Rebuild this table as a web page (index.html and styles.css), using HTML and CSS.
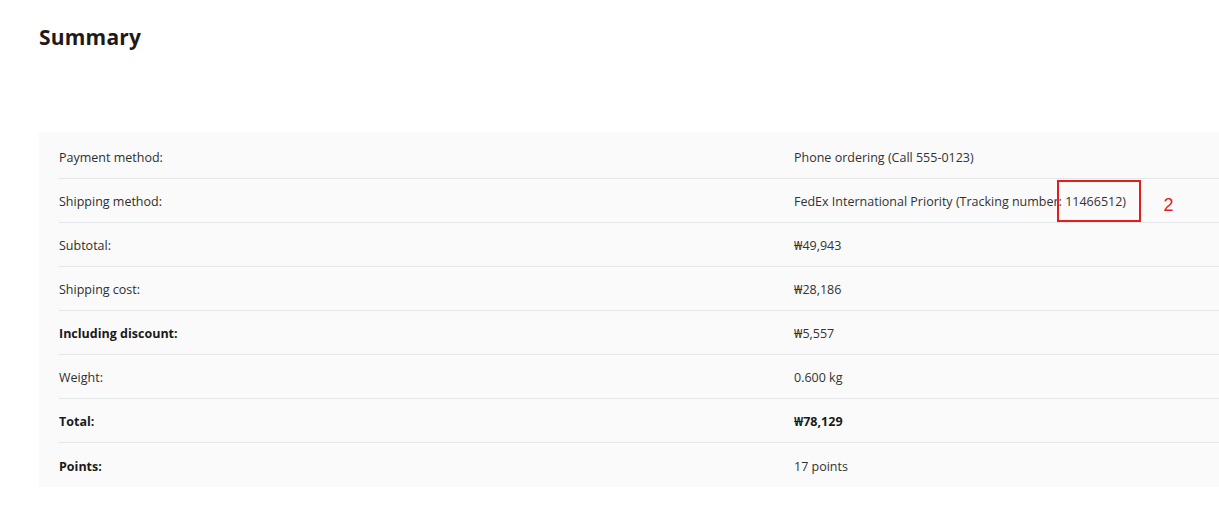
FILE: index.html
```html
<!DOCTYPE html>
<html lang="en">
<head>
<meta charset="utf-8">
<title>Summary</title>
<link rel="stylesheet" href="styles.css">
</head>
<body>
<main class="page">
  <h2 class="title">Summary</h2>
  <section class="summary">
    <div class="row">
      <div class="label">Payment method:</div>
      <div class="value">Phone ordering (Call 555-0123)</div>
    </div>
    <div class="row">
      <div class="label">Shipping method:</div>
      <div class="value">FedEx International Priority (Tracking number<span class="mark-wrap">: <span class="mark">11466512)</span><span class="mark-num">2</span></span></div>
    </div>
    <div class="row">
      <div class="label">Subtotal:</div>
      <div class="value">₩49,943</div>
    </div>
    <div class="row">
      <div class="label">Shipping cost:</div>
      <div class="value">₩28,186</div>
    </div>
    <div class="row">
      <div class="label strong">Including discount:</div>
      <div class="value">₩5,557</div>
    </div>
    <div class="row">
      <div class="label">Weight:</div>
      <div class="value">0.600 kg</div>
    </div>
    <div class="row">
      <div class="label strong">Total:</div>
      <div class="value strong">₩78,129</div>
    </div>
    <div class="row last">
      <div class="label strong">Points:</div>
      <div class="value">17 points</div>
    </div>
  </section>
</main>
</body>
</html>
```

FILE: styles.css
```css
html, body {
  margin: 0;
  padding: 0;
  background: #ffffff;
  overflow: hidden;
}

body {
  font-family: "Open Sans", "Noto Sans", "DejaVu Sans", sans-serif;
  color: #2b2b2b;
}

.page {
  padding: 22px 0 0 39px;
}

.title {
  margin: 0;
  font-family: "Open Sans", "Noto Sans", sans-serif;
  font-size: 21px;
  font-weight: 700;
  color: #1f1a1a;
  line-height: 30px;
  letter-spacing: 0.2px;
}

.summary {
  margin-top: 80px;
  width: 1250px;
  background: #fafafa;
  padding: 3px 0 0 20px;
}

.row {
  box-sizing: border-box;
  display: flex;
  align-items: center;
  height: 44px;
  padding-top: 2px;
  border-bottom: 1px solid #e3e6ea;
  font-size: 12.5px;
}

.row.last {
  border-bottom: none;
}

.label {
  width: 735px;
  flex: none;
  color: #2e2e2e;
}

.value {
  color: #333333;
}

.strong {
  font-weight: 700;
  color: #1a1a1a;
}

.mark-wrap {
  position: relative;
}

.mark {
  position: relative;
}

.mark::before {
  content: "";
  position: absolute;
  left: -8px;
  right: -15px;
  top: -13px;
  bottom: -12px;
  border: 2px solid #e31c1c;
}

.mark-num {
  position: absolute;
  left: 105px;
  top: 2px;
  font-family: "Liberation Sans", Arial, sans-serif;
  font-size: 18px;
  color: #e31c1c;
}
```
